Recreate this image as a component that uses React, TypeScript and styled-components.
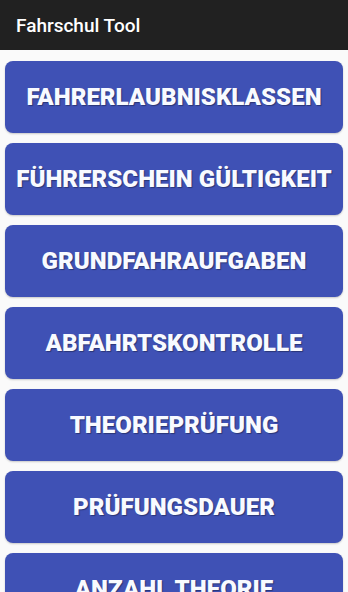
import React from "react";
import styled, { createGlobalStyle } from "styled-components";

const GlobalStyle = createGlobalStyle`
  html, body {
    margin: 0;
    padding: 0;
    background: #fafafa;
    font-family: Roboto, "Liberation Sans", sans-serif;
  }
`;

const items = [
  "Fahrerlaubnisklassen",
  "Führerschein Gültigkeit",
  "Grundfahraufgaben",
  "Abfahrtskontrolle",
  "Theorieprüfung",
  "Prüfungsdauer",
  "Anzahl Theorie",
];

const Page = styled.div`
  width: 348px;
  height: 592px;
  overflow: hidden;
  background: #fafafa;
`;

const Toolbar = styled.header`
  height: 50px;
  background: #212121;
  display: flex;
  align-items: center;
  padding-left: 16px;
  box-sizing: border-box;
`;

const Title = styled.h1`
  margin: 0;
  color: #ffffff;
  font-size: 19px;
  font-weight: 500;
`;

const Menu = styled.div`
  display: flex;
  flex-direction: column;
  gap: 10px;
  padding: 11px 5px 0;
`;

const MenuButton = styled.button`
  height: 72px;
  width: 100%;
  border: none;
  border-radius: 8px;
  background: #3f51b5;
  color: #f8faff;
  font-family: Roboto, "Liberation Sans", sans-serif;
  font-size: 24.1px;
  font-weight: 900;
  text-transform: uppercase;
  text-shadow: 1px 1px 1px rgba(0, 0, 0, 0.35);
  box-shadow: 0 1px 2px rgba(0, 0, 0, 0.2);
  white-space: nowrap;
  padding: 0;
  flex-shrink: 0;
`;

const App: React.FC = () => {
  return (
    <Page>
      <GlobalStyle />
      <Toolbar>
        <Title>Fahrschul Tool</Title>
      </Toolbar>
      <Menu>
        {items.map((label) => (
          <MenuButton key={label}>{label}</MenuButton>
        ))}
      </Menu>
    </Page>
  );
};

export default App;
